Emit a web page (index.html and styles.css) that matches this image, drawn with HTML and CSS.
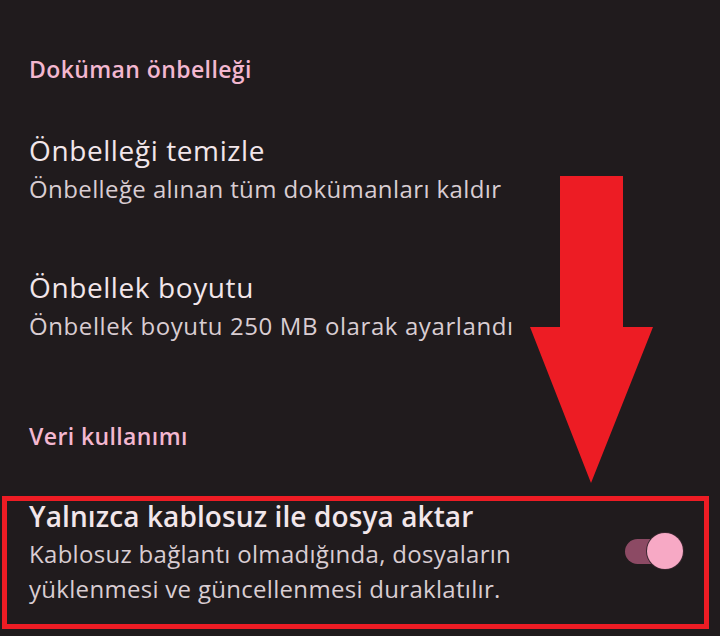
FILE: index.html
```html
<!DOCTYPE html>
<html lang="tr">
<head>
<meta charset="utf-8">
<title>Ayarlar</title>
<link rel="stylesheet" href="styles.css">
</head>
<body>
<main class="screen">
  <h2 class="section-header first">Doküman önbelleği</h2>
  <div class="item item-clear">
    <div class="item-title">Önbelleği temizle</div>
    <div class="item-sub">Önbelleğe alınan tüm dokümanları kaldır</div>
  </div>
  <div class="item item-size">
    <div class="item-title">Önbellek boyutu</div>
    <div class="item-sub">Önbellek boyutu 250 MB olarak ayarlandı</div>
  </div>
  <h2 class="section-header second">Veri kullanımı</h2>
  <div class="highlight">
    <div class="item-text">
      <div class="item-title strong">Yalnızca kablosuz ile dosya aktar</div>
      <div class="item-sub multi">Kablosuz bağlantı olmadığında, dosyaların yüklenmesi ve güncellenmesi duraklatılır.</div>
    </div>
    <div class="toggle">
      <span class="track"></span>
      <span class="thumb"></span>
    </div>
  </div>
  <svg class="arrow" width="720" height="636" viewBox="0 0 720 636" aria-hidden="true">
    <polygon points="560,176 623,176 623,327 653,327 591,483 530,327 560,327" fill="#ed1c24"/>
  </svg>
</main>
</body>
</html>
```

FILE: styles.css
```css
html, body {
  margin: 0;
  padding: 0;
  background: #201b1d;
}
body {
  width: 720px;
  height: 636px;
  overflow: hidden;
  font-family: "Open Sans", "Noto Sans", sans-serif;
}
.screen {
  position: relative;
  width: 720px;
  height: 636px;
  padding-top: 51px;
  box-sizing: border-box;
}
.section-header {
  margin: 0;
  padding-left: 29px;
  font-size: 23px;
  line-height: 36px;
  font-weight: 600;
  letter-spacing: 0.4px;
  color: #f3b7d0;
}
.section-header.second {
  margin-top: 74px;
}
.item {
  padding-left: 29px;
}
.item-clear {
  margin-top: 42px;
}
.item-size {
  margin-top: 59px;
}
.item-title {
  font-size: 28px;
  line-height: 42px;
  letter-spacing: 0.6px;
  color: #f2e6ea;
}
.item-sub {
  font-size: 24px;
  line-height: 36px;
  letter-spacing: 0.4px;
  color: #d9cdd2;
}
.item-size .item-sub {
  letter-spacing: 0.6px;
}
.highlight {
  margin: 42px 11px 0 2px;
  border: 5px solid #ed1c24;
  padding: 0 21px 18px 22px;
  display: flex;
  align-items: flex-start;
}
.item-text {
  flex: 1;
}
.item-title.strong {
  font-weight: 600;
  letter-spacing: 0.1px;
  line-height: 30px;
  margin-bottom: 5px;
}
.item-sub.multi {
  line-height: 35px;
  letter-spacing: 0.3px;
  max-width: 560px;
}
.toggle {
  position: relative;
  width: 58px;
  height: 36px;
  margin-top: 32px;
  flex: none;
}
.track {
  position: absolute;
  left: 0;
  top: 6px;
  width: 50px;
  height: 25px;
  border-radius: 13px;
  background: #8c4a64;
}
.thumb {
  position: absolute;
  left: 22px;
  top: 0;
  width: 36px;
  height: 36px;
  border-radius: 50%;
  background: #f7a9c5;
  box-shadow: 0 0 0 1px #3a2730;
}
.arrow {
  position: absolute;
  left: 0;
  top: 0;
  pointer-events: none;
}
```
